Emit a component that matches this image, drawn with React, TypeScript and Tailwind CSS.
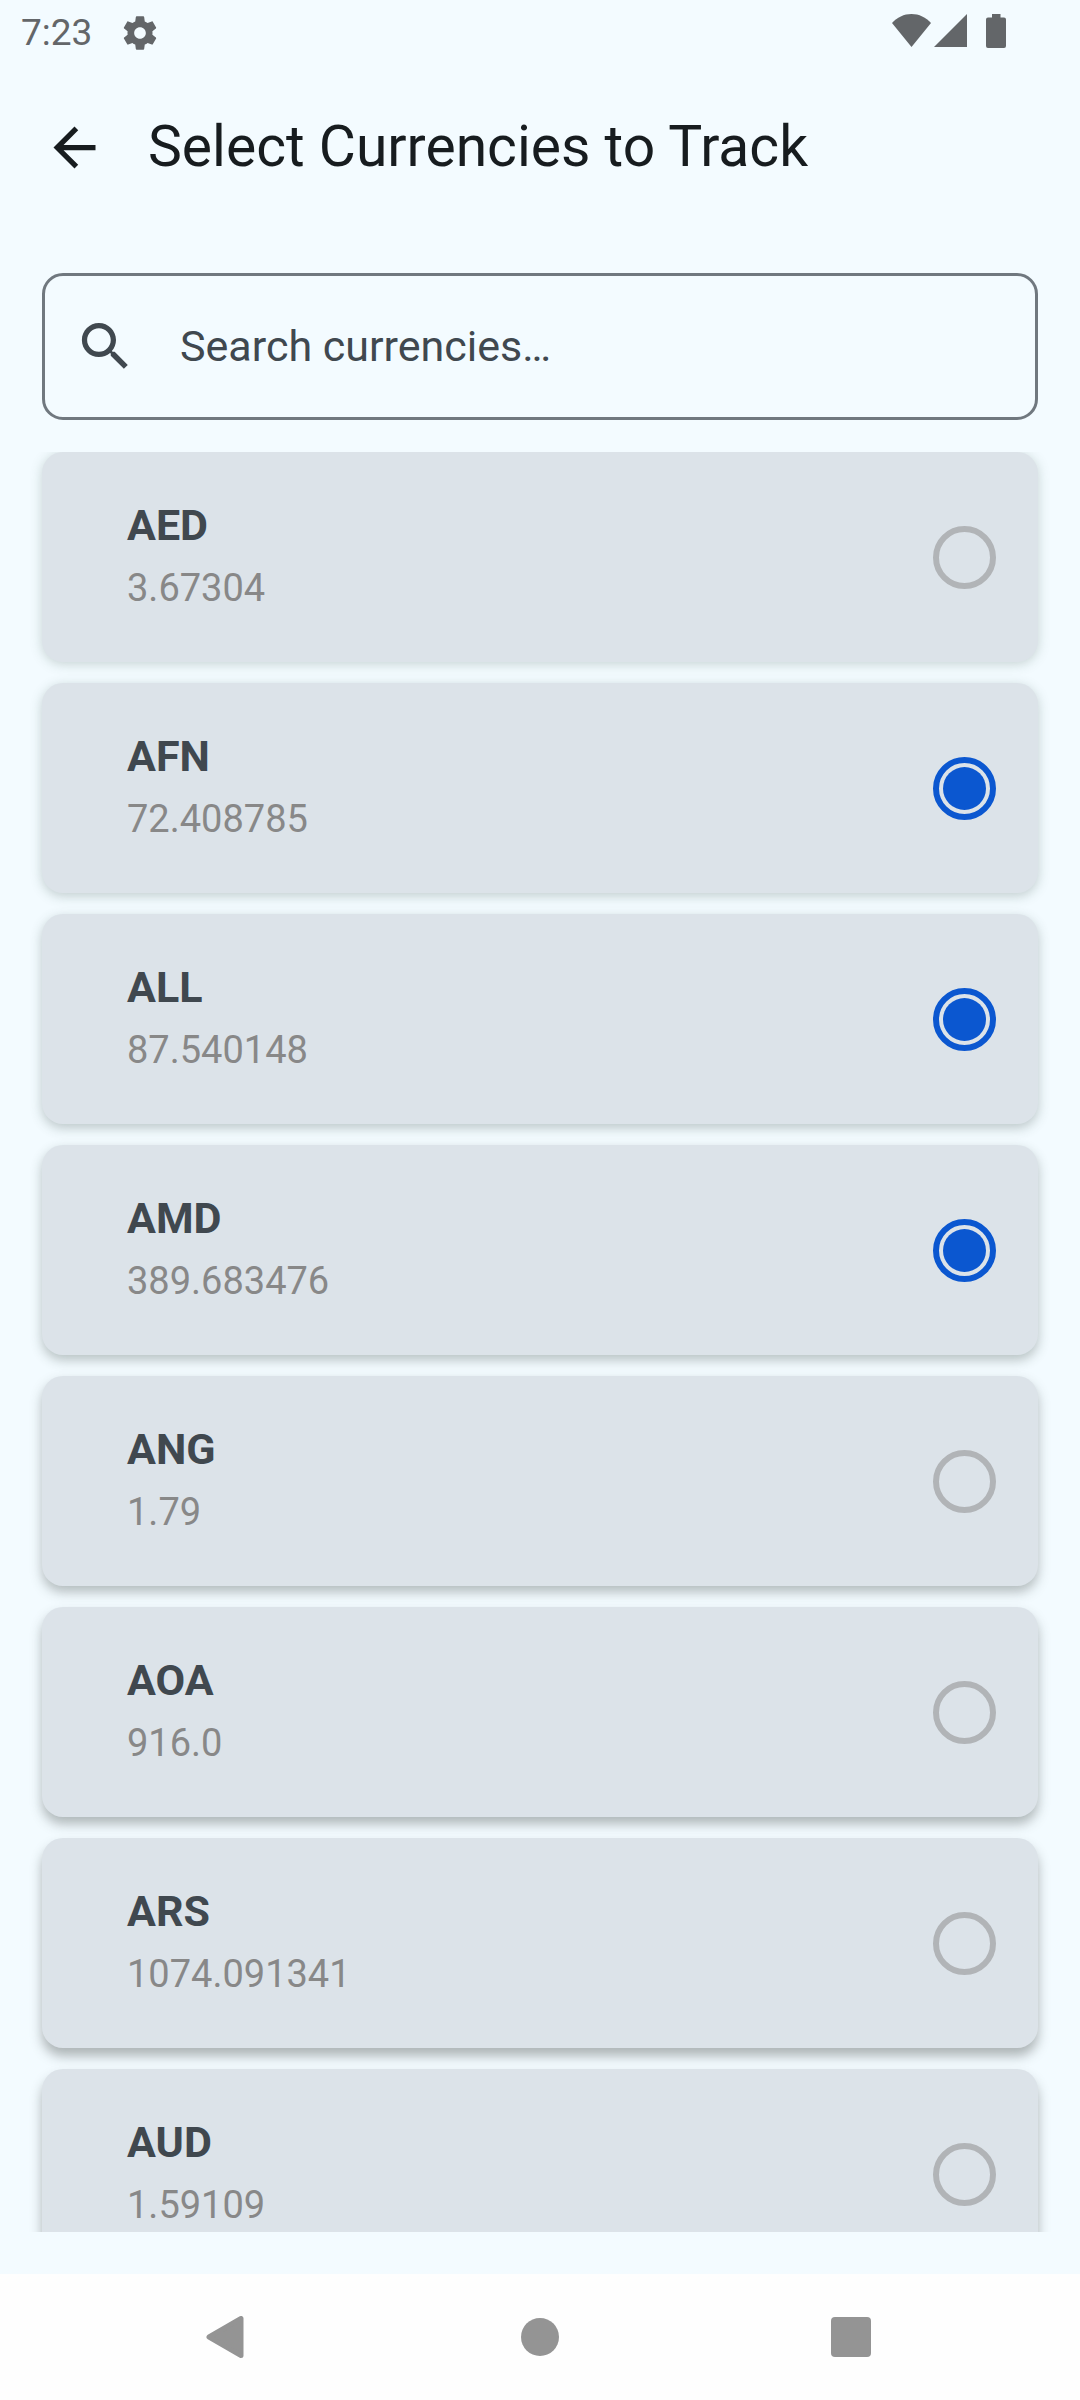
import { useState } from "react";

type Currency = { code: string; rate: string };

const currencies: Currency[] = [
  { code: "AED", rate: "3.67304" },
  { code: "AFN", rate: "72.408785" },
  { code: "ALL", rate: "87.540148" },
  { code: "AMD", rate: "389.683476" },
  { code: "ANG", rate: "1.79" },
  { code: "AOA", rate: "916.0" },
  { code: "ARS", rate: "1074.091341" },
  { code: "AUD", rate: "1.59109" },
];

// Cards further down the list cast a deeper shadow.
const shadows = [
  "shadow-[0_2px_12px_rgba(70,95,80,0.26)]",
  "shadow-[0_3px_12px_rgba(65,90,78,0.28)]",
  "shadow-[0_4px_12px_rgba(60,80,72,0.30)]",
  "shadow-[0_5px_12px_rgba(55,70,65,0.32)]",
  "shadow-[0_6px_12px_rgba(55,65,62,0.34)]",
  "shadow-[0_7px_12px_rgba(50,58,55,0.35)]",
  "shadow-[0_8px_12px_rgba(50,55,52,0.36)]",
  "shadow-[0_8px_12px_rgba(50,55,52,0.36)]",
];

function StatusBar() {
  return (
    <div className="flex h-[63px] shrink-0 items-center justify-between pr-[74px] pb-[2px] pl-[21px] text-[#636669]">
      <div className="flex items-center gap-[28px] pt-[4px]">
        <span className="text-[37px] leading-[43px]">7:23</span>
        <svg className="size-[40px]" viewBox="0 0 24 24" fill="currentColor" aria-hidden="true">
          <path d="M19.43 12.98c.04-.32.07-.64.07-.98s-.03-.66-.07-.98l2.11-1.65c.19-.15.24-.42.12-.64l-2-3.46c-.12-.22-.39-.3-.61-.22l-2.49 1c-.52-.4-1.08-.73-1.69-.98l-.38-2.65C14.46 2.18 14.25 2 14 2h-4c-.25 0-.46.18-.49.42l-.38 2.65c-.61.25-1.17.59-1.69.98l-2.49-1c-.23-.09-.49 0-.61.22l-2 3.46c-.13.22-.07.49.12.64l2.11 1.65c-.04.32-.07.65-.07.98s.03.66.07.98l-2.11 1.65c-.19.15-.24.42-.12.64l2 3.46c.12.22.39.3.61.22l2.49-1c.52.4 1.08.73 1.69.98l.38 2.65c.03.24.24.42.49.42h4c.25 0 .46-.18.49-.42l.38-2.65c.61-.25 1.17-.59 1.69-.98l2.49 1c.23.09.49 0 .61-.22l2-3.46c.12-.22.07-.49-.12-.64l-2.11-1.65zM12 15.5c-1.93 0-3.5-1.57-3.5-3.5s1.57-3.5 3.5-3.5 3.5 1.57 3.5 3.5-1.57 3.5-3.5 3.5z" />
        </svg>
      </div>
      <div className="flex items-center gap-[3px]">
        <svg className="h-[33px] w-[39px]" viewBox="0 0 39 33" fill="currentColor" aria-hidden="true">
          <path d="M19.5 33L0 9C5 3.4 12 0 19.5 0S34 3.4 39 9z" />
        </svg>
        <svg className="size-[33px]" viewBox="0 0 33 33" fill="currentColor" aria-hidden="true">
          <path d="M0 33H33V0z" />
        </svg>
        <svg className="ml-[16px] h-[34px] w-[20px]" viewBox="0 0 20 34" fill="currentColor" aria-hidden="true">
          <path d="M6 0h8.500v3.500H18a2 2 0 0 1 2 2V32a2 2 0 0 1-2 2H2a2 2 0 0 1-2-2V5.500a2 2 0 0 1 2-2h4z" />
        </svg>
      </div>
    </div>
  );
}

function CurrencyCard({ currency, shadow, checked, onToggle }: {
  currency: Currency;
  shadow: string;
  checked: boolean;
  onToggle: () => void;
}) {
  return (
    <li>
      <label className={`flex items-center justify-between rounded-[21px] bg-[#dce3e9] py-[42px] pr-[42px] pl-[85px] ${shadow}`}>
        <span className="flex flex-col leading-[63px]">
          <span className="text-[43px] font-bold text-[#40484f]">{currency.code}</span>
          <span className="text-[38px] text-[#888888]">{currency.rate}</span>
        </span>
        <input
          type="checkbox"
          checked={checked}
          onChange={onToggle}
          className="size-[63px] shrink-0 appearance-none rounded-full border-[6px] border-[#b1b4b7] bg-clip-content p-[4px] checked:border-[#0b57d0] checked:bg-[#0b57d0]"
        />
      </label>
    </li>
  );
}

export default function App() {
  const [query, setQuery] = useState("");
  const [selected, setSelected] = useState<string[]>(["AFN", "ALL", "AMD"]);

  const toggle = (code: string) =>
    setSelected((s) => (s.includes(code) ? s.filter((c) => c !== code) : [...s, code]));

  const visible = currencies.filter((c) => c.code.toLowerCase().includes(query.toLowerCase()));

  return (
    <div className="flex h-screen flex-col bg-[#f3fbff] font-[Roboto,sans-serif]">
      <StatusBar />
      <header className="flex h-[168px] shrink-0 items-center gap-[11px] pl-[11px] text-[#171c1f]">
        <button type="button" aria-label="Back" className="flex size-[126px] items-center justify-center">
          <svg className="size-[63px]" viewBox="0 0 24 24" fill="currentColor" aria-hidden="true">
            <path d="M20 11H7.830l5.590-5.590L12 4l-8 8 8 8 1.410-1.410L7.830 13H20v-2z" />
          </svg>
        </button>
        <h1 className="text-[57px] leading-[74px]">Select Currencies to Track</h1>
      </header>
      <main className="flex min-h-0 flex-1 flex-col pt-[42px] pb-[42px]">
        <label className="mx-[42px] flex h-[147px] shrink-0 items-center gap-[43px] rounded-[21px] border-[3px] border-[#70787f] pr-[42px] pl-[29px] text-[#40484f]">
          <svg className="size-[63px] shrink-0" viewBox="0 0 24 24" fill="currentColor" aria-hidden="true">
            <path d="M15.500 14h-.790l-.280-.270C15.410 12.590 16 11.110 16 9.500 16 5.910 13.090 3 9.500 3S3 5.910 3 9.500 5.910 16 9.500 16c1.610 0 3.090-.590 4.230-1.570l.270.280v.790l5 4.990L20.490 19l-4.990-5zm-6 0C7.010 14 5 11.990 5 9.500S7.010 5 9.500 5 14 7.010 14 9.500 11.990 14 9.500 14z" />
          </svg>
          <input
            type="text"
            aria-label="Search currencies"
            placeholder="Search currencies…"
            value={query}
            onChange={(e) => setQuery(e.target.value)}
            className="min-w-0 flex-1 bg-transparent text-[43px] leading-[63px] outline-none placeholder:text-[#40484f]"
          />
        </label>
        <ul className="mt-[32px] flex min-h-0 flex-1 flex-col gap-[21px] overflow-hidden px-[42px]">
          {visible.map((c, i) => (
            <CurrencyCard
              key={c.code}
              currency={c}
              shadow={shadows[i]}
              checked={selected.includes(c.code)}
              onToggle={() => toggle(c.code)}
            />
          ))}
        </ul>
      </main>
      <nav className="flex h-[126px] shrink-0 bg-[#fefefe] px-[74px] text-[#949494]">
        <button type="button" aria-label="Back" className="flex flex-1 items-center justify-center">
          <svg className="mr-[8px] h-[42px] w-[38px]" viewBox="0 0 38 42" fill="currentColor" stroke="currentColor" strokeWidth="5" strokeLinejoin="round" aria-hidden="true">
            <path d="M3 21L35 2.500V39.500z" />
          </svg>
        </button>
        <button type="button" aria-label="Home" className="flex flex-1 items-center justify-center">
          <span className="size-[38px] rounded-full bg-current" />
        </button>
        <button type="button" aria-label="Recent apps" className="flex flex-1 items-center justify-center">
          <span className="size-[40px] rounded-[4px] bg-current" />
        </button>
      </nav>
    </div>
  );
}
